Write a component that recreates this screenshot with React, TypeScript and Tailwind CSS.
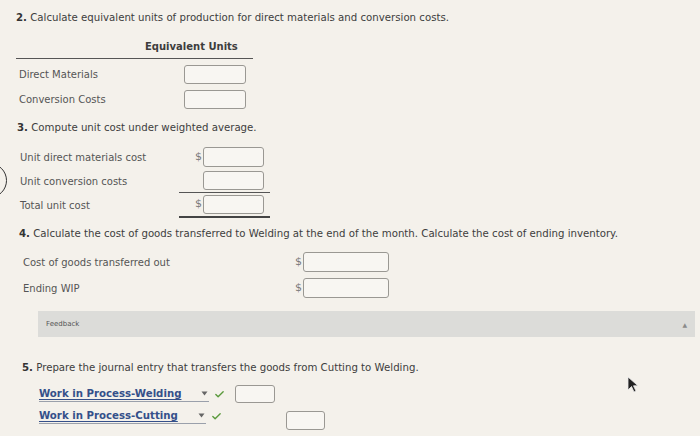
import { Check } from "lucide-react";

const Box = ({ w, h = 20 }: { w: number; h?: number }) => (
  <span
    className="block rounded-[3px] border border-[#9a9893] bg-[#f8f6f2]"
    style={{ width: w, height: h }}
  />
);

const Dollar = () => <span className="mr-[1px] text-[11px] text-[#7a7a7a]">$</span>;

const Arrow = () => (
  <svg width="7" height="5" viewBox="0 0 7 5" className="mr-[1px]">
    <path d="M0.5 0.5 L6.5 0.5 L3.5 4.5 Z" fill="#666" />
  </svg>
);

export default function App() {
  return (
    <div className="relative w-[700px] h-[436px] overflow-hidden bg-[#f4f1eb] font-['DejaVu_Sans',Verdana,sans-serif] text-[#4b4b4b]">
      {/* left nav circle, cut off by the edge */}
      <span className="absolute left-[-28px] top-[163px] w-[35px] h-[35px] rounded-full border-[1.5px] border-[#333]" />

      {/* 2 */}
      <p className="pl-4 pt-[12px] text-[10.2px] leading-[12px] text-[#3d3d3d]">
        <b className="text-[#333]">2.</b> Calculate equivalent units of production for direct materials and conversion costs.
      </p>
      <div className="ml-4 mt-[17px] w-[237px] text-[10px]">
        <div className="pl-[129px] pb-[5px] border-b border-[#555] font-bold text-[10px] leading-[12px] text-[#3d3d3d]">
          Equivalent Units
        </div>
        <div className="mt-[3px] flex h-[25px] items-center">
          <span className="w-[168px] pl-[3px] text-[#555]">Direct Materials</span>
          <Box w={62} h={19} />
        </div>
        <div className="flex h-[25px] items-center">
          <span className="w-[168px] pl-[3px] text-[#555]">Conversion Costs</span>
          <Box w={62} h={19} />
        </div>
      </div>

      {/* 3 */}
      <p className="pl-[17px] mt-[10px] text-[10.2px] leading-[12px] text-[#3d3d3d]">
        <b className="text-[#333]">3.</b> Compute unit cost under weighted average.
      </p>
      <div className="ml-5 mt-[11px] text-[10px] text-[#555]">
        <div className="flex h-[24px] items-center">
          <span className="w-[159px]">Unit direct materials cost</span>
          <span className="flex w-[91px] items-center justify-end pr-[6px]">
            <Dollar />
            <Box w={61} />
          </span>
        </div>
        <div className="flex h-[24px] items-center">
          <span className="w-[159px]">Unit conversion costs</span>
          <span className="flex h-[24px] w-[91px] items-center justify-end border-b border-[#555] pr-[6px]">
            <Box w={61} h={19} />
          </span>
        </div>
        <div className="flex h-[25px] items-center">
          <span className="w-[159px]">Total unit cost</span>
          <span className="flex h-[25px] w-[91px] items-center justify-end border-b-2 border-[#444] pr-[6px]">
            <Dollar />
            <Box w={61} h={19} />
          </span>
        </div>
      </div>

      {/* 4 */}
      <p className="pl-[19px] mt-[10px] text-[10.2px] leading-[12px] text-[#3d3d3d]">
        <b className="text-[#333]">4.</b> Calculate the cost of goods transferred to Welding at the end of the month. Calculate the cost of ending inventory.
      </p>
      <div className="ml-[23px] mt-[9px] text-[10px] text-[#555]">
        <div className="flex h-[26px] items-center">
          <span className="w-[272px]">Cost of goods transferred out</span>
          <Dollar />
          <Box w={86} />
        </div>
        <div className="flex h-[26px] items-center">
          <span className="w-[272px]">Ending WIP</span>
          <Dollar />
          <Box w={86} />
        </div>
      </div>

      {/* feedback bar */}
      <div className="ml-[38px] mr-[5px] mt-[10px] flex h-[26px] items-center justify-between bg-[#dcdcd9] pl-2 pr-[8px]">
        <span className="text-[7px] text-[#555]">Feedback</span>
        <span className="text-[6px] text-[#8a8a8a]">▲</span>
      </div>

      {/* 5 */}
      <p className="pl-[22px] mt-[25px] text-[10.2px] leading-[12px] text-[#3d3d3d]">
        <b className="text-[#333]">5.</b> Prepare the journal entry that transfers the goods from Cutting to Welding.
      </p>
      <div className="ml-[39px] mt-[9px] text-[10.2px]">
        <div className="flex h-[22px] items-center">
          <span className="flex w-[170px] items-center justify-between border-b border-[#9aa0ab]">
            <span className="font-bold text-[#35508a] underline underline-offset-2">Work in Process-Welding</span>
            <Arrow />
          </span>
          <Check size={11} strokeWidth={3} className="ml-[5px] text-[#5a9a3c]" />
          <span className="ml-[10px]">
            <Box w={40} h={18} />
          </span>
        </div>
        <div className="flex h-[22px] items-center">
          <span className="flex w-[167px] items-center justify-between border-b border-[#9aa0ab]">
            <span className="font-bold text-[#35508a] underline underline-offset-2">Work in Process-Cutting</span>
            <Arrow />
          </span>
          <Check size={11} strokeWidth={3} className="ml-[5px] text-[#5a9a3c]" />
          <span className="ml-[64px] mt-[8px]">
            <Box w={39} h={19} />
          </span>
        </div>
      </div>

      {/* mouse cursor */}
      <svg className="absolute left-[627px] top-[376px]" width="14" height="18" viewBox="0 0 14 18">
        <path d="M1 1 L1 14 L4.5 10.5 L7 16 L9 15 L6.5 9.8 L11 9.8 Z" fill="#222" stroke="#eee" strokeWidth="0.8" />
      </svg>
    </div>
  );
}
